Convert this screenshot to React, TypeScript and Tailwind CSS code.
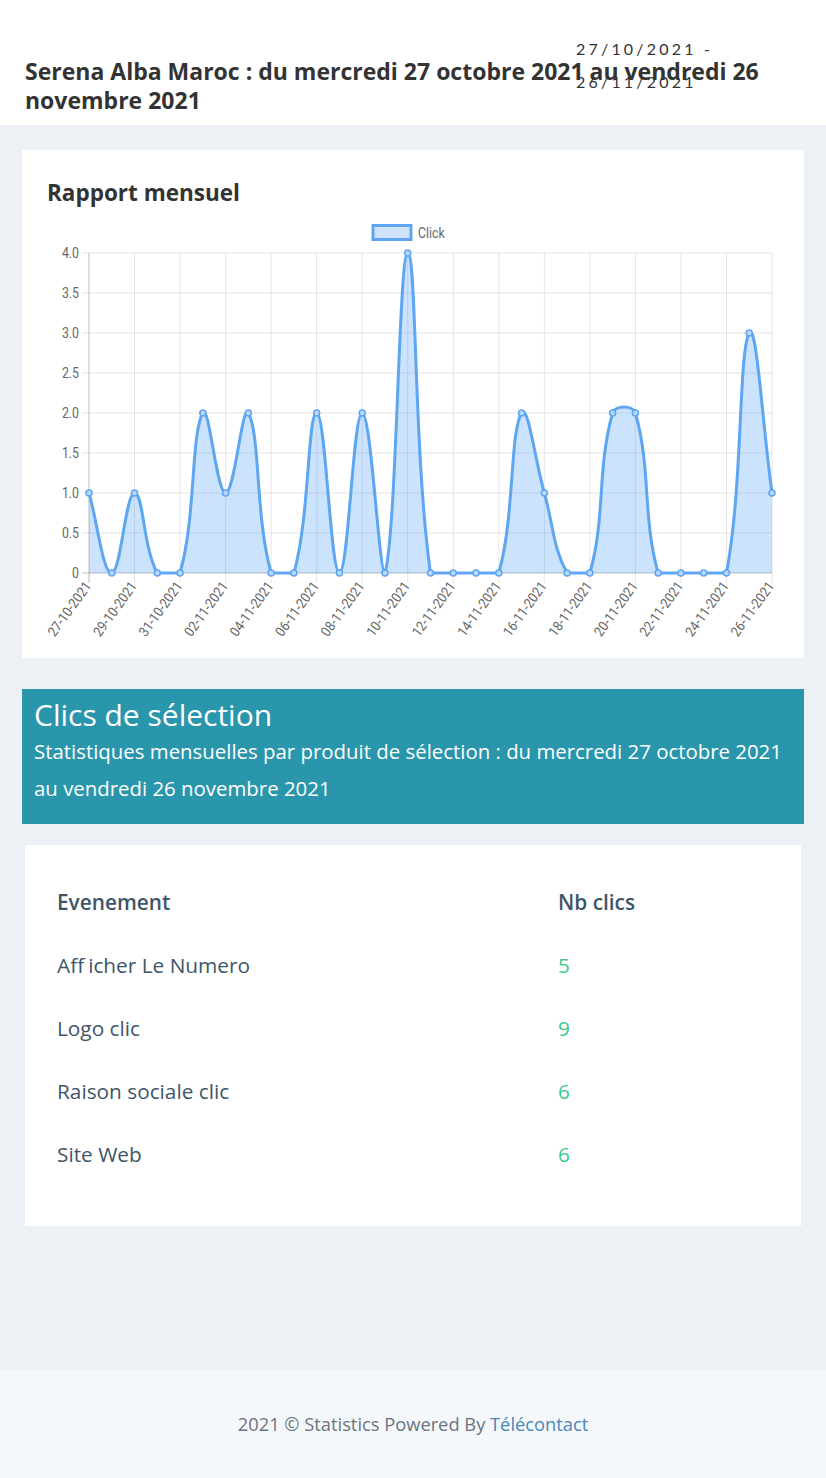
import React from "react";

// données du graphique (un point par jour)
const values = [1, 0, 1, 0, 0, 2, 1, 2, 0, 0, 2, 0, 2, 0, 4, 0, 0, 0, 0, 2, 1, 0, 0, 2, 2, 0, 0, 0, 0, 3, 1];
const labels = [
  "27-10-2021", "29-10-2021", "31-10-2021", "02-11-2021", "04-11-2021", "06-11-2021", "08-11-2021", "10-11-2021",
  "12-11-2021", "14-11-2021", "16-11-2021", "18-11-2021", "20-11-2021", "22-11-2021", "24-11-2021", "26-11-2021",
];

const X0 = 89;
const X1 = 772;
const Y0 = 573;
const YTOP = 253;
const step = (X1 - X0) / (values.length - 1);

type Pt = { x: number; y: number };

// courbe bezier façon Chart.js (tension 0.4)
function buildPath(pts: Pt[]) {
  const t = 0.4;
  const cps = pts.map((cur, i) => {
    const prev = pts[i - 1] ?? cur;
    const next = pts[i + 1] ?? cur;
    const d01 = Math.hypot(cur.x - prev.x, cur.y - prev.y);
    const d12 = Math.hypot(next.x - cur.x, next.y - cur.y);
    let s01 = d01 / (d01 + d12);
    let s12 = d12 / (d01 + d12);
    if (isNaN(s01)) s01 = 0;
    if (isNaN(s12)) s12 = 0;
    const fa = t * s01;
    const fb = t * s12;
    const clampY = (y: number) => Math.min(Y0, Math.max(YTOP - 20, y));
    return {
      prev: { x: cur.x - fa * (next.x - prev.x), y: clampY(cur.y - fa * (next.y - prev.y)) },
      next: { x: cur.x + fb * (next.x - prev.x), y: clampY(cur.y + fb * (next.y - prev.y)) },
    };
  });
  let d = `M${pts[0].x},${pts[0].y}`;
  for (let i = 1; i < pts.length; i++) {
    const a = cps[i - 1].next;
    const b = cps[i].prev;
    d += ` C${a.x},${a.y} ${b.x},${b.y} ${pts[i].x},${pts[i].y}`;
  }
  return d;
}

function MonthlyChart() {
  const pts = values.map((v, i) => ({ x: X0 + i * step, y: Y0 - v * 80 }));
  const line = buildPath(pts);
  const area = `${line} L${X1},${Y0} L${X0},${Y0} Z`;
  const yTicks = ["4.0", "3.5", "3.0", "2.5", "2.0", "1.5", "1.0", "0.5", "0"];

  return (
    <svg
      width={732}
      height={440}
      viewBox="47 218 732 440"
      className="block mt-[10px] overflow-visible"
      style={{ fontFamily: "Roboto, sans-serif" }}
    >
      {/* légende */}
      <rect x={373} y={225.5} width={38} height={14} fill="#cfe4fb" stroke="#5ea6f2" strokeWidth={3} />
      <text transform="translate(418,238) scale(0.88,1)" fontSize={14} fill="#666">Click</text>

      {/* grille */}
      {yTicks.map((t, i) => {
        const y = YTOP + i * 40;
        return (
          <g key={t}>
            <line x1={82} x2={X1} y1={y} y2={y} stroke={i === 8 ? "rgba(0,0,0,0.25)" : "rgba(0,0,0,0.1)"} />
            <text transform={`translate(79,${y + 5}) scale(0.88,1)`} fontSize={14} fill="#666" textAnchor="end">{t}</text>
          </g>
        );
      })}
      {labels.map((l, i) => {
        const x = X0 + i * step * 2;
        return (
          <g key={l}>
            <line x1={x} x2={x} y1={YTOP} y2={Y0 + 10} stroke={i === 0 ? "rgba(0,0,0,0.25)" : "rgba(0,0,0,0.1)"} />
            <text transform={`translate(${x + 3},${Y0 + 13}) rotate(-54) scale(0.9,1)`} fontSize={14} fill="#666" textAnchor="end">{l}</text>
          </g>
        );
      })}

      {/* série */}
      <path d={area} fill="rgba(54,148,245,0.26)" />
      <path d={line} fill="none" stroke="#5ea6f2" strokeWidth={3} />
      {pts.map((p, i) => (
        <circle key={i} cx={p.x} cy={p.y} r={3} fill="#b9d8fb" stroke="#5ea6f2" strokeWidth={1.5} />
      ))}
    </svg>
  );
}

const rows = [
  { label: "Afficher Le Numero", value: 5 },
  { label: "Logo clic", value: 9 },
  { label: "Raison sociale clic", value: 6 },
  { label: "Site Web", value: 6 },
];

export default function App() {
  return (
    <div className="min-h-[1478px] flex flex-col bg-[#edf1f5] text-[#333]" style={{ fontFamily: "'Open Sans', 'Noto Sans', sans-serif" }}>
      {/* en-tête */}
      <header className="relative bg-white h-[125px] px-[25px] pt-[57px]">
        <h1 className="text-[23px] leading-[29px] font-bold text-[#333]">
          Serena Alba Maroc : du mercredi 27 octobre 2021 au vendredi 26 novembre 2021
        </h1>
        <div
          className="absolute left-[576px] top-[32px] text-[16px] leading-[33px] tracking-[0.2em] text-[#333]"
          style={{ fontFamily: "Lato, sans-serif" }}
        >
          <div>27/10/2021 -</div>
          <div>26/11/2021</div>
        </div>
      </header>

      {/* rapport mensuel */}
      <section className="mx-[22px] mt-[25px] bg-white h-[508px] px-[25px]">
        <h2 className="pt-[28px] text-[22.5px] leading-[30px] font-bold text-[#333]">Rapport mensuel</h2>
        <MonthlyChart />
      </section>

      {/* clics de sélection */}
      <section className="mx-[22px] mt-[31px] bg-[#2a96ab] text-white px-[12px] pt-[8px] pb-[17px]">
        <h3 className="text-[30px] leading-[36px]">Clics de sélection</h3>
        <p className="text-[20.4px] leading-[37px]">
          Statistiques mensuelles par produit de sélection : du mercredi 27 octobre 2021 au vendredi 26 novembre 2021
        </p>
      </section>

      <section className="mx-[25px] mt-[21px] bg-white px-[32px] pt-[26px] pb-[40px] text-[20.8px] text-[#3e5569]">
        <div className="grid grid-cols-[501px_1fr] h-[63px] items-center font-semibold">
          <div>Evenement</div>
          <div>Nb clics</div>
        </div>
        {rows.map((r) => (
          <div key={r.label} className="grid grid-cols-[501px_1fr] h-[63px] items-center">
            <div>
              {r.label === "Afficher Le Numero" ? (
                <>
                  <span>Aff</span>
                  <span className="ml-[4px]">icher Le Numero</span>
                </>
              ) : (
                r.label
              )}
            </div>
            <div className="text-[#3ccb8c]">{r.value}</div>
          </div>
        ))}
      </section>

      <div className="flex-1" />

      <footer className="bg-[#f5f8fb] h-[108px] flex items-center justify-center text-[18.3px] text-[#6b747d]">
        <span>
          2021 © Statistics Powered By <span className="text-[#4a86b8]">Télécontact</span>
        </span>
      </footer>
    </div>
  );
}
